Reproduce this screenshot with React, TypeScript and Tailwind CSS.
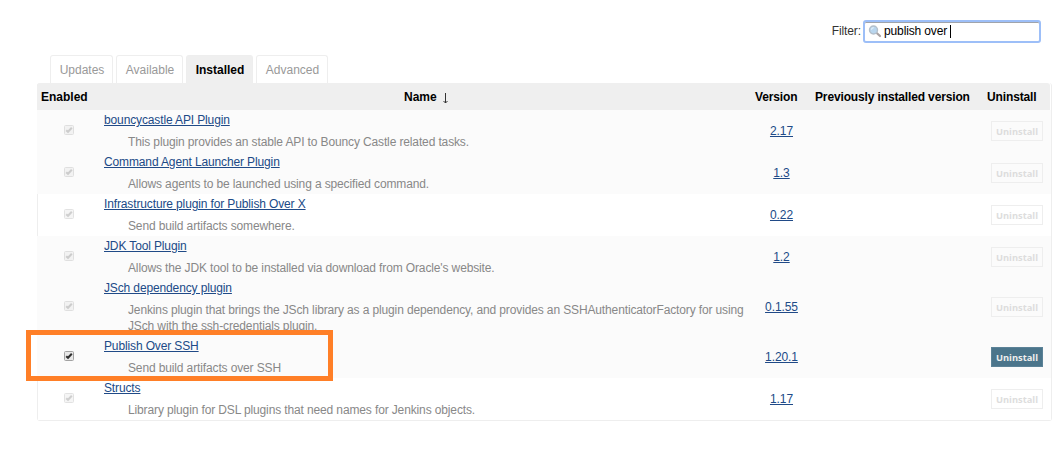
type Plugin = {
  name: string;
  lines: string[];
  version: string;
  enabled?: boolean;
  shaded: boolean;
};

const plugins: Plugin[] = [
  { name: 'bouncycastle API Plugin', lines: ['This plugin provides an stable API to Bouncy Castle related tasks.'], version: '2.17', shaded: true },
  { name: 'Command Agent Launcher Plugin', lines: ['Allows agents to be launched using a specified command.'], version: '1.3', shaded: true },
  { name: 'Infrastructure plugin for Publish Over X', lines: ['Send build artifacts somewhere.'], version: '0.22', shaded: false },
  { name: 'JDK Tool Plugin', lines: ["Allows the JDK tool to be installed via download from Oracle's website."], version: '1.2', shaded: true },
  {
    name: 'JSch dependency plugin',
    lines: [
      'Jenkins plugin that brings the JSch library as a plugin dependency, and provides an SSHAuthenticatorFactory for using',
      'JSch with the ssh-credentials plugin.',
    ],
    version: '0.1.55',
    shaded: true,
  },
  { name: 'Publish Over SSH', lines: ['Send build artifacts over SSH'], version: '1.20.1', enabled: true, shaded: true },
  { name: 'Structs', lines: ['Library plugin for DSL plugins that need names for Jenkins objects.'], version: '1.17', shaded: false },
];

const tabs = [
  { label: 'Updates', width: 'w-[63px]' },
  { label: 'Available', width: 'w-[67px]' },
  { label: 'Installed', width: 'w-[67px]', active: true },
  { label: 'Advanced', width: 'w-[72px]' },
];

function SearchIcon() {
  return (
    <svg className="ml-[3px] h-[14px] w-[14px] shrink-0" viewBox="0 0 14 14" fill="none">
      <path d="M9 8.2 12 11" stroke="#aaa3a3" strokeWidth="2.2" strokeLinecap="round" />
      <circle cx="5.5" cy="5" r="4" fill="#b9d6ee" stroke="#b3bfcb" strokeWidth="1.4" />
      <path d="M3.3 4.7a2.5 2.5 0 0 1 2.4-2" stroke="#e3f0fa" strokeWidth="1.2" />
    </svg>
  );
}

function Check({ enabled }: { enabled?: boolean }) {
  return (
    <svg className={`h-[10px] w-[10px] ${enabled ? '' : 'opacity-25'}`} viewBox="0 0 10 10" fill="none">
      <rect x="0.5" y="0.5" width="9" height="9" rx="1" fill={enabled ? '#e8e8e8' : '#d8d8d8'} stroke={enabled ? '#a2a2a2' : '#909090'} />
      <path d="M2.2 5.2 4 6.8 7.8 2.8" stroke={enabled ? '#303030' : '#444444'} strokeWidth="2" />
    </svg>
  );
}

function Row({ plugin }: { plugin: Plugin }) {
  return (
    <div
      className={`grid grid-cols-[66px_647px_61px_178px_60px] items-center ${
        plugin.shaded ? '-ml-px bg-[#fbfbfb] pl-px' : 'bg-white'
      }`}
    >
      <div className="pb-[2px] pl-[26px]">
        <Check enabled={plugin.enabled} />
      </div>
      <div className="pt-[2px] pb-[2px] tracking-[-0.13px]">
        <div className="h-[22px] leading-[16px]">
          <a className="text-[#204a87] underline">{plugin.name}</a>
        </div>
        <div className="pl-6 leading-[16px] whitespace-nowrap text-[#888888]">
          {plugin.lines.map((line) => (
            <div key={line}>{line}</div>
          ))}
        </div>
      </div>
      <div className="text-center leading-[16px] tracking-[-0.08px]">
        <a className="text-[#204a87] underline">{plugin.version}</a>
      </div>
      <div />
      <div className="pl-[1px]">
        <button
          className={`block h-5 w-[52px] border text-center font-['Open_Sans',sans-serif] text-[9.3px] leading-[19px] font-bold ${
            plugin.enabled ? 'border-[#5b8297] bg-[#4b758b] text-[#eeeeee]' : 'border-[#eeeeee] text-[#dddddd]'
          }`}
        >
          Uninstall
        </button>
      </div>
    </div>
  );
}

export default function App() {
  return (
    <div className="relative h-[458px] w-[1060px] overflow-hidden bg-white font-['Liberation_Sans',Arial,sans-serif] text-[12px] text-[#333333]">
      <div className="flex h-[55px] items-start justify-end pt-5 pr-[19px]">
        <span className="pr-[2px] leading-[22px] tracking-[-0.1px]">Filter:</span>
        <div className="flex h-[23px] w-[178px] items-center rounded-[3px] border-2 border-[#9dbff8] bg-white text-black shadow-[inset_0_1px_0_#a0a4ab]">
          <SearchIcon />
          <span className="pb-[2px] pl-[2px] leading-[18px] tracking-[-0.13px] whitespace-pre">publish over </span>
          <span className="mb-px h-[13px] w-px bg-black" />
        </div>
      </div>

      <div className="flex h-7 gap-[3px] pl-[50px]">
        {tabs.map((tab) => (
          <div
            key={tab.label}
            className={`${tab.width} rounded-t-[3px] border border-b-0 border-[#eeeeee] pl-px text-center leading-[28px] ${
              tab.active ? 'bg-[#efefef] font-bold text-black' : 'bg-white text-[#999999]'
            }`}
          >
            {tab.label}
          </div>
        ))}
      </div>

      <div className="ml-[37px] h-[338px] w-[1015px] rounded-[3px] border border-t-0 border-[#eeeeee]">
        <div className="-ml-px grid h-[27px] w-[1013px] grid-cols-[66px_647px_61px_178px_60px] items-center rounded-t-[3px] bg-[#efefef] pt-px pl-px leading-[26px] font-bold whitespace-nowrap text-black">
          <div className="pl-[3px]">Enabled</div>
          <div className="flex pl-[300px]">
            Name
            <svg className="mt-[9px] ml-[5px] h-[11px] w-[7px]" viewBox="0 0 7 11" fill="none">
              <path d="M3.5 0v10M1.5 8l2 2 2-2" stroke="#333333" />
            </svg>
          </div>
          <div className="pl-[4px] tracking-[-0.13px]">Version</div>
          <div className="pl-[3px] tracking-[-0.14px]">Previously installed version</div>
          <div className="-ml-[3px] tracking-[-0.13px]">Uninstall</div>
        </div>
        {plugins.map((plugin) => (
          <Row key={plugin.name} plugin={plugin} />
        ))}
      </div>

      <div className="pointer-events-none absolute top-[330px] left-[26px] h-[51px] w-[307px] border-[5px] border-[#ff7f27]" />
    </div>
  );
}
